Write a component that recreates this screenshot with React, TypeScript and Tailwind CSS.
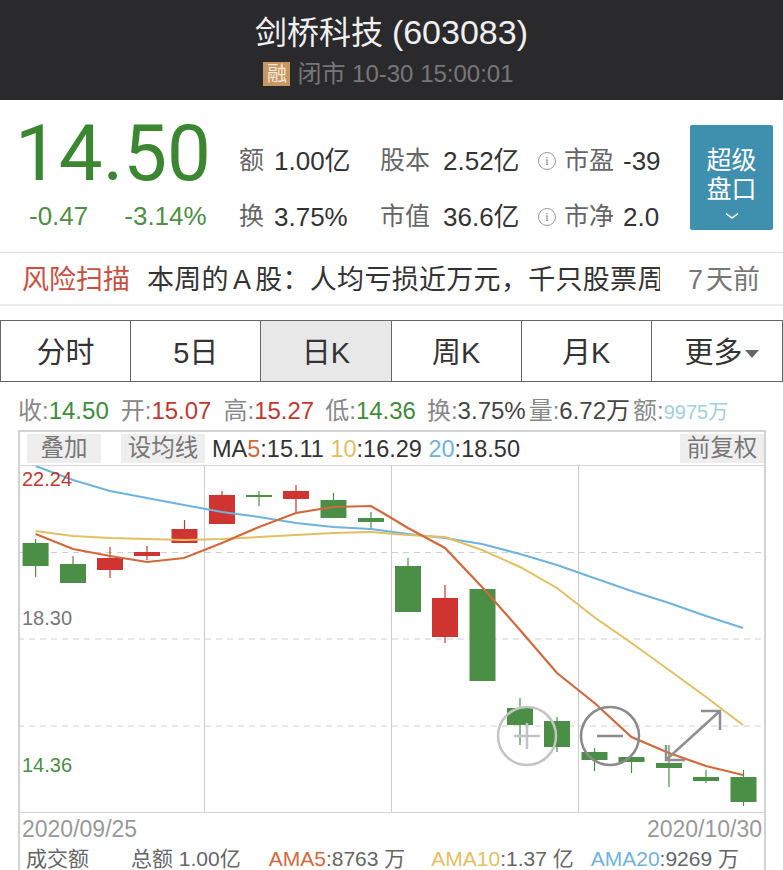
const font = { fontFamily: '"Liberation Sans", "Noto Sans CJK SC", sans-serif' };

const GREEN = "#4a8f45";
const RED = "#cf3431";

// x centre, body top, body bottom, wick top, wick bottom
const candles: [number, number, number, number, number, string][] = [
  [35.6, 543, 566, 539, 577, GREEN],
  [73, 564, 583, 556, 583, GREEN],
  [110, 558, 570, 547, 578, RED],
  [147, 552, 556, 546, 560, RED],
  [184.5, 529, 543, 520, 543, RED],
  [222, 495, 524, 491, 524, RED],
  [259, 495, 497, 491, 506, GREEN],
  [296, 491, 499, 485, 513, RED],
  [333.5, 500, 518, 493, 518, GREEN],
  [371, 518, 522, 512, 530, GREEN],
  [408, 566, 612, 558, 612, GREEN],
  [445, 598, 637, 585, 643, RED],
  [482.5, 589, 681, 589, 681, GREEN],
  [520, 708, 725, 698, 745, GREEN],
  [557, 721, 747, 717, 752, GREEN],
  [594.5, 752, 760, 748, 771, GREEN],
  [631.5, 757, 762, 757, 773, GREEN],
  [669, 763, 768, 745, 787, GREEN],
  [706, 777, 781, 770, 783, GREEN],
  [743.5, 777, 802, 770, 806, GREEN],
];

const ma5 =
  "35.6,534 73,549 110,556 147,562 184,558 222,543 259,527 296,513 333,507 371,506 383,513 408,528 445,548 482,587 520,630 557,673 594.5,703 631.5,737 669,753 706,766 743,775";
const ma10 =
  "35.6,531 73,536 110,538 147,539 184,540 222,539 259,537 296,535 333,533 371,532 408,535 445,537 482,550 520,567 557,588 594,617 631.5,643 669,670 706,697 743,725";
const ma20 =
  "35.6,466 73,480 110,491 147,498 184,505 222,512 259,517 296,523 333,527 371,529 408,534 445,538 482,544 520,554 557,565 594,578 631.5,591 669,603 706,616 743,628";

function StatRow({ label, value, labelWidth }: { label: string; value: string; labelWidth: string }) {
  return (
    <div className="flex items-center">
      <span className={labelWidth + " text-[25px] text-[#666]"}>{label}</span>
      <span className="text-[26px] text-[#333]">{value}</span>
    </div>
  );
}

function InfoStat({ label, value }: { label: string; value: string }) {
  return (
    <div className="flex items-center">
      <span className="flex h-[18px] w-[18px] items-center justify-center rounded-full border border-[#999] font-serif text-[12px] text-[#888]">
        i
      </span>
      <span className="ml-[8px] w-[59px] text-[25px] text-[#666]">{label}</span>
      <span className="text-[26px] text-[#333]">{value}</span>
    </div>
  );
}

function Chart() {
  return (
    <svg viewBox="20 466 744 346" className="block h-[346px] w-[744px]">
      {[552.5, 639, 726].map((y) => (
        <line key={y} x1="18" x2="765" y1={y} y2={y} stroke="#cfcfcf" strokeDasharray="6 5" />
      ))}
      {[204.5, 391.5, 578.5].map((x) => (
        <line key={x} x1={x} x2={x} y1="465" y2="812" stroke="#cccccc" />
      ))}
      {candles.map(([x, top, bottom, wickTop, wickBottom, color]) => (
        <g key={x} fill={color} stroke={color}>
          <line x1={x} x2={x} y1={wickTop} y2={wickBottom} strokeWidth="1.2" />
          <rect x={x - 13} y={top} width="26" height={bottom - top} stroke="none" />
        </g>
      ))}
      <polyline points={ma20} fill="none" stroke="#6fb3dc" strokeWidth="2" />
      <polyline points={ma10} fill="none" stroke="#e2bf62" strokeWidth="2" />
      <polyline points={ma5} fill="none" stroke="#d2693c" strokeWidth="2.2" />
      {/* zoom controls drawn over the chart */}
      <g fill="none">
        <circle cx="527" cy="736" r="29" stroke="#c4c4c4" strokeWidth="2.5" />
        <path d="M514 736h26M527 723v26" stroke="#c4c4c4" strokeWidth="2.5" />
        <circle cx="610" cy="736" r="29" stroke="#8a8a8a" strokeWidth="2.5" />
        <path d="M597 736h26" stroke="#8a8a8a" strokeWidth="2.5" />
        <path d="M666 760L720 711M701 711h19v19M666 745v15h19" stroke="#8f8f8f" strokeWidth="2.5" />
      </g>
    </svg>
  );
}

export default function App() {
  return (
    <div className="h-[870px] w-[783px] overflow-hidden bg-white" style={font}>
      <header className="flex h-[100px] flex-col items-center bg-[#2a2a2d] text-center">
        <div className="mt-[13px] text-[32px] leading-[38px] text-[#f0f0f0]">
          剑桥科技 <span className="text-[34px]">(603083)</span>
        </div>
        <div className="mt-[9px] flex items-center pr-[6px] text-[24px] leading-[26px] text-[#77777a]">
          <span className="mr-[7px] flex h-[24px] w-[27px] items-center justify-center bg-[#c69763] text-[20px] text-[#f6e8d8]">
            融
          </span>
          闭市 10-30 15:00:01
        </div>
      </header>

      <section className="flex h-[153px] border-b border-[#dcdcdc]">
        <div className="w-[239px] pl-[15px] pt-[14px]">
          <div className="font-['Roboto'] text-[78px] font-normal leading-[80px] text-[#3b8631]">14.50</div>
          <div className="flex h-[44px] items-center text-[26px] text-[#4f8f45]">
            <span className="ml-[14px]">-0.47</span>
            <span className="ml-[36px]">-3.14%</span>
          </div>
        </div>
        <div className="grid h-[145px] w-[451px] grid-cols-[141px_158px_1fr] grid-rows-[56px_56px] items-center pt-[33px]">
          <StatRow label="额" value="1.00亿" labelWidth="w-[35px]" />
          <StatRow label="股本" value="2.52亿" labelWidth="w-[63px]" />
          <InfoStat label="市盈" value="-39" />
          <StatRow label="换" value="3.75%" labelWidth="w-[35px]" />
          <StatRow label="市值" value="36.6亿" labelWidth="w-[63px]" />
          <InfoStat label="市净" value="2.0" />
        </div>
        <div className="mt-[25px] flex h-[105px] w-[83px] flex-col items-center rounded-[2px] bg-[#3f8fae] pt-[21px] text-[25px] leading-[29px] text-white">
          <span>超级</span>
          <span>盘口</span>
          <svg viewBox="0 0 14 8" className="mt-[8px] h-[8px] w-[14px]">
            <path d="M1 1.5L7 6l6-4.5" fill="none" stroke="#ffffff" strokeWidth="1.5" />
          </svg>
        </div>
      </section>

      <section className="flex h-[53px] items-center border-b-2 border-[#ececec] pt-[4px] text-[27px]">
        <span className="ml-[22px] w-[125px] text-[#c9503f]">风险扫描</span>
        <span className="w-[513px] overflow-hidden whitespace-nowrap tracking-[0.3px] text-[#333]">
          本周的<span className="mx-[4px]">A</span>股：人均亏损近万元，千只股票周
        </span>
        <span className="ml-[28px] text-[#777]">
          7<span className="ml-[3px]">天前</span>
        </span>
      </section>

      <nav className="mt-[14px] grid h-[62px] grid-cols-6 border border-[#666] text-[29px] text-[#333]">
        {["分时", "5日", "日K", "周K", "月K"].map((tab) => (
          <div
            key={tab}
            className={
              tab === "日K"
                ? "flex items-center justify-center border-r border-[#666] bg-[#e8e8e8] pt-[6px]"
                : "flex items-center justify-center border-r border-[#666] pt-[6px]"
            }
          >
            {tab}
          </div>
        ))}
        <div className="flex items-center justify-center gap-[3px] pl-[10px] pt-[6px]">
          更多
          <svg viewBox="0 0 14 8" className="h-[8px] w-[14px]">
            <polygon points="0,0 14,0 7,8" fill="#666666" />
          </svg>
        </div>
      </nav>

      <div className="ml-[18px] flex h-[48px] items-center whitespace-nowrap pt-[10px] text-[24px] text-[#888]">
        <span>收:<span className="text-[#3f8b3c]">14.50</span></span>
        <span className="ml-[12px]">开:<span className="text-[#c0392f]">15.07</span></span>
        <span className="ml-[12px]">高:<span className="text-[#c0392f]">15.27</span></span>
        <span className="ml-[11px]">低:<span className="text-[#3f8b3c]">14.36</span></span>
        <span className="ml-[11px]">换:<span className="text-[#444]">3.75%</span></span>
        <span className="ml-[3px]">量:<span className="text-[#444]">6.72万</span></span>
        <span className="ml-[3px]">额:<span className="text-[20px] text-[#9fd0dc]">9975万</span></span>
      </div>

      <div className="relative mx-[18px] w-[748px] border-x-2 border-t-2 border-[#d2d2d2]">
        <div className="flex h-[34px] items-center border-b border-[#d5d5d5] text-[23.5px] text-[#333]">
          <span className="ml-[7px] flex h-[29px] w-[74px] items-center justify-center bg-[#eeeeee] text-[#777]">叠加</span>
          <span className="ml-[20px] flex h-[29px] w-[84px] items-center justify-center bg-[#eeeeee] text-[#777]">设均线</span>
          <span className="ml-[7px] whitespace-nowrap pt-[2px]">
            MA<span className="text-[#d2693c]">5</span>:15.11 <span className="text-[#e2bf62]">10</span>:16.29{" "}
            <span className="text-[#6fb3dc]">20</span>:18.50
          </span>
          <span className="ml-auto flex h-[29px] w-[84px] items-center justify-center bg-[#eeeeee] text-[#777]">前复权</span>
        </div>
        <span className="absolute left-[2px] top-[35px] text-[20px] leading-[24px] text-[#c0392f]">22.24</span>
        <span className="absolute left-[2px] top-[174px] text-[20px] leading-[24px] text-[#777]">18.30</span>
        <span className="absolute left-[2px] top-[321px] text-[20px] leading-[24px] text-[#4a8f45]">14.36</span>
        <Chart />
        <div className="flex h-[34px] items-center justify-between border-t border-[#d5d5d5] px-[2px] text-[23px] text-[#999]">
          <span>2020/09/25</span>
          <span>2020/10/30</span>
        </div>
        <div className="flex items-center whitespace-nowrap text-[21px] leading-[26px] text-[#666]">
          <span className="ml-[6px]">成交额</span>
          <span className="ml-[42px]">总额 1.00亿</span>
          <span className="ml-[28px]"><span className="text-[#d2693c]">AMA5</span>:8763 万</span>
          <span className="ml-[26px]"><span className="text-[#e2bf62]">AMA10</span>:1.37 亿</span>
          <span className="ml-[17px]"><span className="text-[#6fb3dc]">AMA20</span>:9269 万</span>
        </div>
      </div>
    </div>
  );
}
